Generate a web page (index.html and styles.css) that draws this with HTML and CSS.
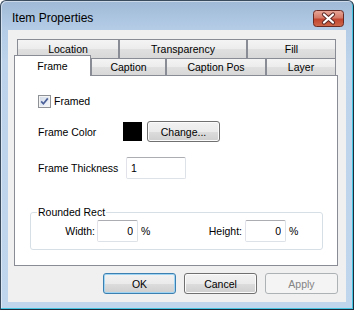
FILE: index.html
```html
<!DOCTYPE html>
<html lang="en">
<head>
  <meta charset="UTF-8">
  <title>Item Properties</title>
  <link rel="stylesheet" href="styles.css">
</head>
<body>
<div class="window">
  <div class="titlebar">
    <span class="title">Item Properties</span>
    <span class="close">
      <svg width="31" height="17" viewBox="0 0 31 17">
        <defs>
          <linearGradient id="cg" x1="0" y1="0" x2="0" y2="1">
            <stop offset="0" stop-color="#e9a99a"/>
            <stop offset="0.45" stop-color="#d47a68"/>
            <stop offset="0.55" stop-color="#c2452f"/>
            <stop offset="1" stop-color="#cf6a4c"/>
          </linearGradient>
        </defs>
        <rect x="0.5" y="0.5" width="30" height="16" rx="3" fill="url(#cg)" stroke="#6a2a24"/>
        <path d="M11 4.5 L20 12.5 M20 4.5 L11 12.5" stroke="#5e2a26" stroke-width="4.2" stroke-linecap="round"/>
        <path d="M11 4.5 L20 12.5 M20 4.5 L11 12.5" stroke="#ffffff" stroke-width="2.2" stroke-linecap="round"/>
      </svg>
    </span>
  </div>
  <div class="body">
    <div class="client">
      <div class="tabs">
        <div class="tab-row back">
          <div class="tab w-location">Location</div>
          <div class="tab w-transparency">Transparency</div>
          <div class="tab w-fill">Fill</div>
        </div>
        <div class="tab-row front">
          <div class="tab selected w-frame">Frame</div>
          <div class="tab w-caption">Caption</div>
          <div class="tab w-captionpos">Caption Pos</div>
          <div class="tab w-layer">Layer</div>
        </div>
        <div class="panel">
          <div class="row check-row">
            <span class="checkbox">
              <svg width="13" height="13" viewBox="0 0 13 13">
                <defs>
                  <linearGradient id="kg" x1="0" y1="0" x2="1" y2="1">
                    <stop offset="0" stop-color="#d5dde9"/>
                    <stop offset="1" stop-color="#f3f6fa"/>
                  </linearGradient>
                </defs>
                <rect x="0.5" y="0.5" width="12" height="12" fill="#f4f4f4" stroke="#8e9196"/>
                <rect x="2" y="2" width="9" height="9" fill="url(#kg)"/>
                <path d="M3.2 6.4 L5.4 8.8 L9.8 3.4" fill="none" stroke="#4c619a" stroke-width="1.7"/>
              </svg>
            </span>
            Framed
          </div>
          <div class="row color-row">
            <span class="label color-label">Frame Color</span>
            <span class="swatch"></span>
            <button class="btn change">Change...</button>
          </div>
          <div class="row thick-row">
            <span class="label thick-label">Frame Thickness</span>
            <input class="field thick" type="text" value="1">
          </div>
          <fieldset class="group">
            <legend>Rounded Rect</legend>
            <div class="pct-row">
              <span class="pct-label width-label">Width:</span>
              <input class="field pct" type="text" value="0">
              <span class="pct-sign">%</span>
              <span class="pct-label height-label">Height:</span>
              <input class="field pct" type="text" value="0">
              <span class="pct-sign">%</span>
            </div>
          </fieldset>
        </div>
      </div>
      <div class="footer">
        <button class="btn default">OK</button>
        <button class="btn">Cancel</button>
        <button class="btn disabled">Apply</button>
      </div>
    </div>
  </div>
</div>
</body>
</html>
```

FILE: styles.css
```css
body {
  margin: 0;
  font-family: "Liberation Sans", Arial, sans-serif;
  font-size: 10.5px;
  color: #000;
  background: #fff;
}
.window {
  width: 354px;
  height: 310px;
  box-sizing: border-box;
  border: 1px solid #3a4b5e;
  border-right-color: #1d2b3a;
  border-bottom-color: #1d2b3a;
  border-radius: 6px 6px 0 0;
  background: linear-gradient(to bottom, #9fb9d6 0, #b4cce6 28px, #bcd3eb 60px, #c0d6ed 100%);
  box-shadow: inset -1px -1px 0 #44c6e2, inset 1px 1px 0 rgba(255,255,255,0.45);
  overflow: hidden;
}
.titlebar {
  height: 29px;
  display: flex;
  align-items: flex-start;
  justify-content: space-between;
  padding: 0 9px 0 11px;
}
.title {
  font-size: 12px;
  line-height: 15px;
  margin-top: 10px;
  color: #000;
}
.close {
  margin-top: 9px;
  height: 17px;
  display: block;
}
.close svg {
  display: block;
}
.body {
  padding: 0 7px;
}
.client {
  height: 272px;
  background: #f0f0f0;
}
.tabs {
  width: 324px;
  margin-left: 6px;
  padding-top: 9px;
}
.tab-row {
  display: flex;
}
.tab-row.back {
  margin-left: 3px;
}
.tab {
  box-sizing: border-box;
  border: 1px solid #898c95;
  border-bottom: none;
  background: linear-gradient(to bottom, #f4f4f4 0, #ececec 50%, #e0e0e0 51%, #d8d8d8 100%);
  text-align: center;
}
.back .tab {
  height: 19px;
  line-height: 18px;
}
.front .tab {
  height: 17px;
  line-height: 16px;
}
.front .tab.selected {
  height: 21px;
  line-height: 20px;
  margin-top: -3px;
  margin-bottom: -1px;
  background: #fff;
  position: relative;
  z-index: 1;
}
.w-location { width: 102px; }
.w-transparency { width: 128px; }
.w-fill { width: 89px; }
.w-frame { width: 77px; }
.w-caption { width: 75px; }
.w-captionpos { width: 100px; }
.w-layer { width: 70px; }
.panel {
  box-sizing: border-box;
  height: 191px;
  background: #fff;
  border: 1px solid #898c95;
  padding: 15px 0 0 15px;
}
.row {
  display: flex;
  align-items: center;
  margin-left: 8px;
}
.check-row {
  height: 20px;
}
.checkbox {
  width: 13px;
  height: 13px;
  margin-right: 3px;
}
.checkbox svg {
  display: block;
}
.color-row {
  height: 21px;
  margin-top: 10px;
}
.color-label {
  width: 85px;
}
.swatch {
  width: 19px;
  height: 19px;
  background: #000;
}
.change {
  margin-left: 5px;
}
.thick-row {
  height: 22px;
  margin-top: 15px;
}
.thick-label {
  width: 88px;
}
.field {
  box-sizing: border-box;
  height: 22px;
  border: 1px solid #dde2e8;
  border-top-color: #abadb3;
  border-left-color: #e2e3ea;
  border-radius: 2px;
  background: #fff;
  font-family: inherit;
  font-size: 10.5px;
  color: #000;
  padding: 0 4px;
  margin: 0;
  outline: none;
}
.thick {
  width: 60px;
}
.group {
  box-sizing: border-box;
  width: 293px;
  min-width: 0;
  margin: 26px 0 0 0;
  padding: 0 6px 7px 6px;
  border: 1px solid #d5dfe5;
  border-radius: 3px;
}
.group legend {
  padding: 0 1px;
  line-height: 14px;
}
.pct-row {
  display: flex;
  align-items: center;
  height: 22px;
  margin-top: 1px;
}
.pct-label {
  text-align: right;
}
.width-label {
  width: 58px;
}
.height-label {
  width: 93px;
}
.pct {
  width: 41px;
  text-align: right;
  margin-left: 2px;
}
.height-label + .pct {
  margin-left: 3px;
}
.pct-sign {
  width: 8px;
  margin-left: 3px;
}
.footer {
  display: flex;
  justify-content: flex-end;
  gap: 8px;
  padding: 7px 8px 0 0;
}
.btn {
  box-sizing: border-box;
  width: 73px;
  height: 21px;
  padding: 0;
  border: 1px solid #707070;
  border-radius: 3px;
  background: linear-gradient(to bottom, #f2f2f2 0, #ebebeb 50%, #dddddd 51%, #cfcfcf 100%);
  box-shadow: inset 0 0 0 1px #fbfbfb;
  font-family: inherit;
  font-size: 10.5px;
  color: #000;
}
.btn.default {
  border-color: #3c7fb1;
  box-shadow: inset 0 0 0 1px #9fd5f3;
}
.btn.disabled {
  border-color: #adb2b5;
  background: #f4f4f4;
  box-shadow: none;
  color: #838383;
}
```
